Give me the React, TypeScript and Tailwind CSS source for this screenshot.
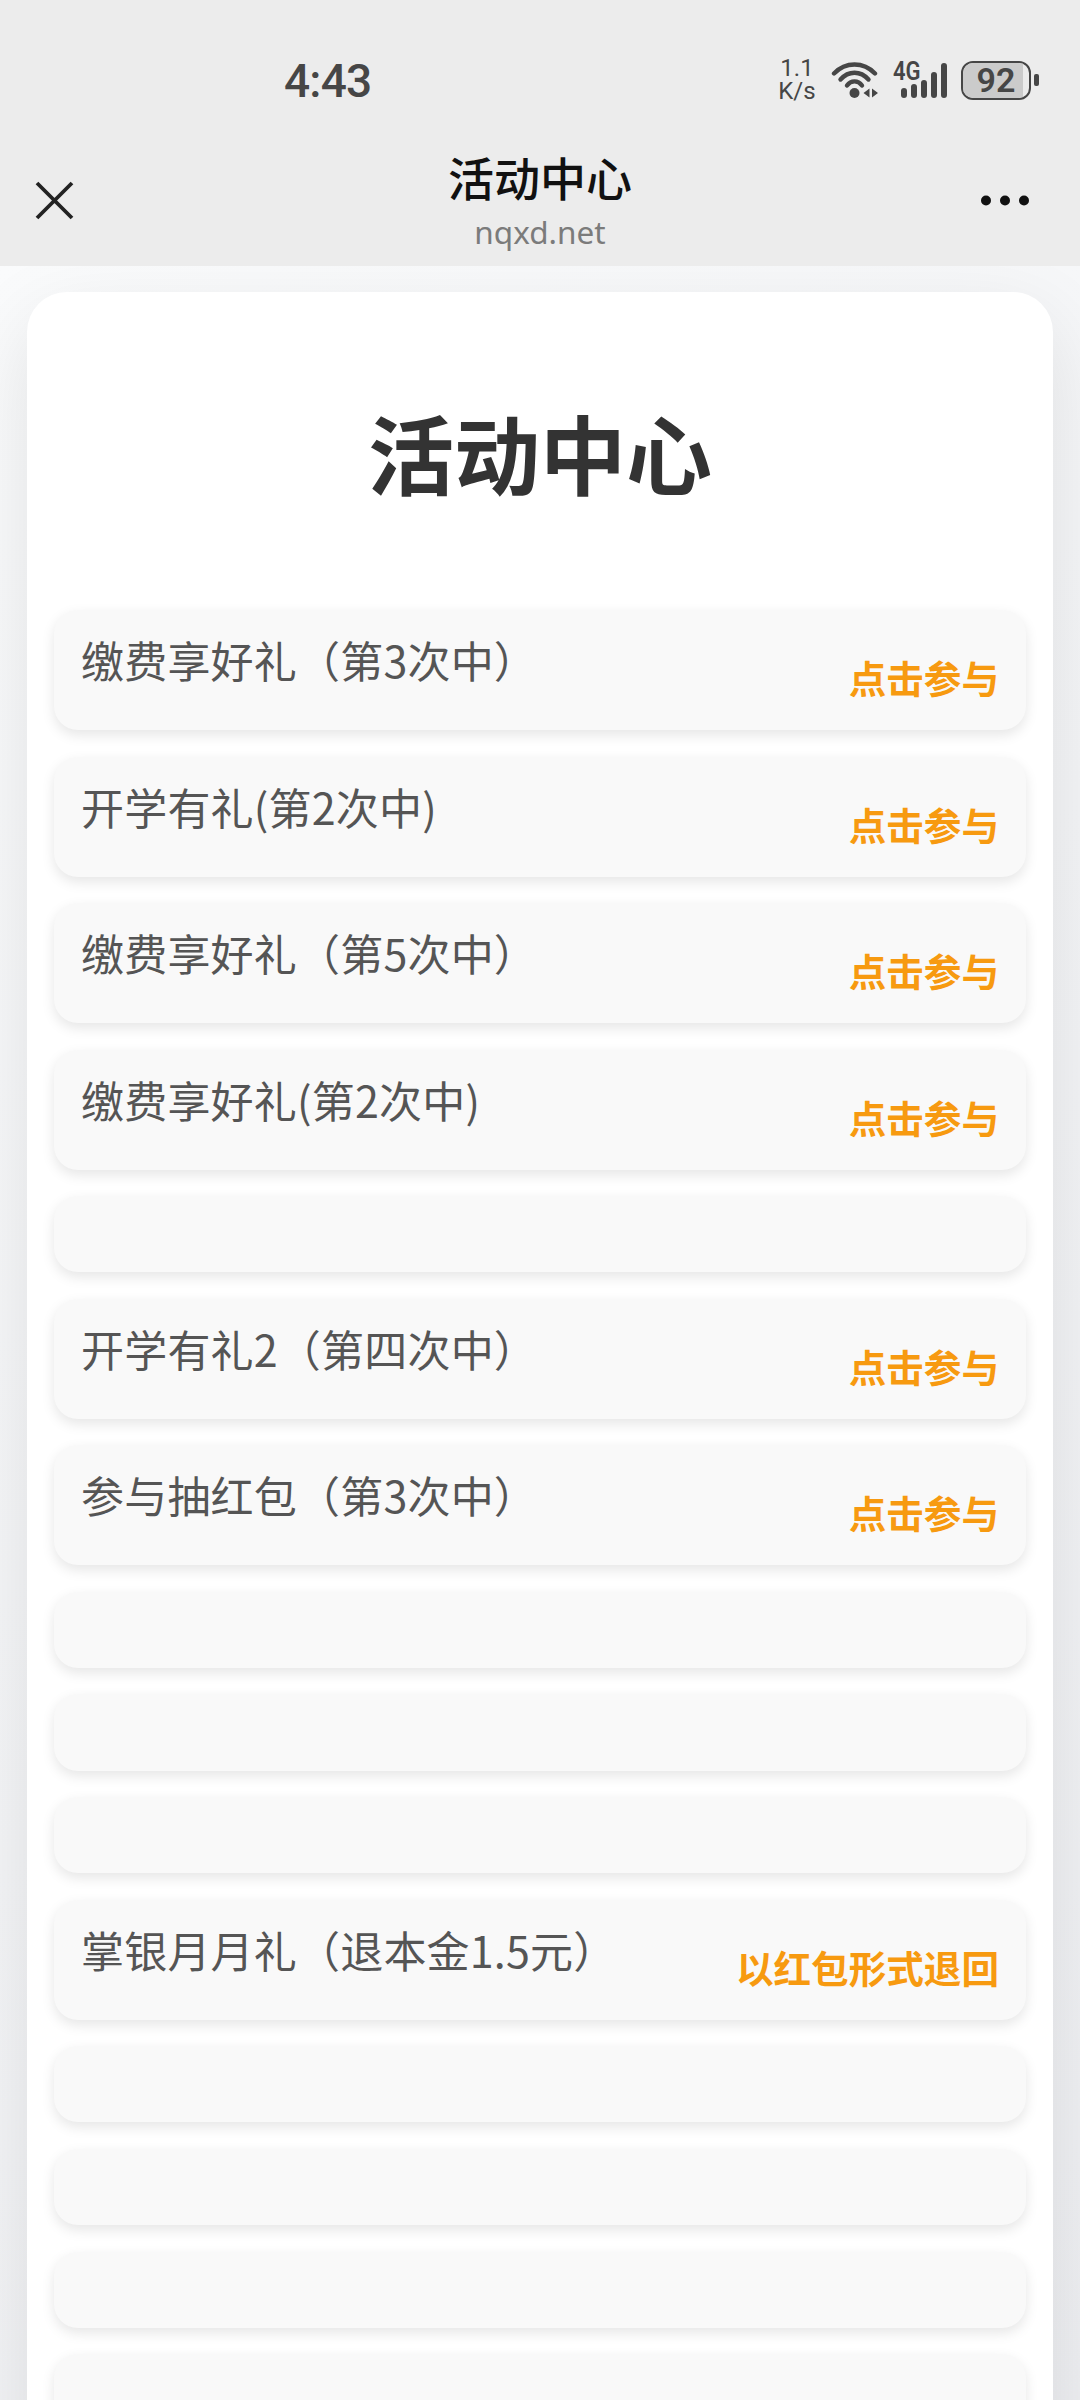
import { cva } from 'class-variance-authority';

interface Activity {
  title?: string;
  action?: string;
}

const activities: Activity[] = [
  { title: '缴费享好礼（第3次中）', action: '点击参与' },
  { title: '开学有礼(第2次中)', action: '点击参与' },
  { title: '缴费享好礼（第5次中）', action: '点击参与' },
  { title: '缴费享好礼(第2次中)', action: '点击参与' },
  {},
  { title: '开学有礼2（第四次中）', action: '点击参与' },
  { title: '参与抽红包（第3次中）', action: '点击参与' },
  {},
  {},
  {},
  { title: '掌银月月礼（退本金1.5元）', action: '以红包形式退回' },
  {},
  {},
  {},
  {},
];

const row = cva(
  'flex shrink-0 justify-between rounded-[24px] bg-[#f9f9f9] px-[27px] shadow-[0_5px_13px_rgba(0,0,0,0.1)]',
  {
    variants: {
      empty: {
        true: 'h-[76.2px]',
        false: 'h-[120px]',
      },
    },
  },
);

function WifiIcon() {
  return (
    <svg width="48" height="38" viewBox="0 0 48 38" fill="none" stroke="#464646" strokeWidth="4.4" strokeLinecap="round">
      <path d="M3 12.500C14.500 0.500 32.500 0.500 44 12.500" />
      <path d="M9.500 18.500C17.500 9.500 29.500 9.500 37.500 18.500" />
      <path d="M16 24.500C20 19 27 19 31 24.500" />
      <circle cx="23.500" cy="32" r="5" fill="#464646" stroke="none" />
      <path d="M38.500 27.500V36.500L32.500 32ZM41 27.500V36.500L47 32Z" fill="#464646" stroke="none" />
    </svg>
  );
}

function SignalIcon() {
  return (
    <div className="relative h-[37px] w-[54px]">
      <span className="absolute -top-[3px] left-0 origin-left scale-x-[0.88] font-['Roboto',sans-serif] text-[25px] leading-[25px] font-semibold">
        4G
      </span>
      <svg className="absolute inset-0" width="54" height="37" stroke="#464646" strokeWidth="6" strokeLinecap="round">
        <path d="M11 29V33M21 25V33M31 21V33M41 13V33M51 4V33" />
      </svg>
    </div>
  );
}

function Battery() {
  return (
    <div className="flex items-center gap-[3px]">
      <div className="relative flex h-[39px] w-[70px] items-center justify-center overflow-hidden rounded-[12px] border-[2.500px] border-[#464646]">
        <div className="absolute inset-y-0 left-0 w-[60px] bg-[#cbcbcb]" />
        <span className="relative font-['Roboto',sans-serif] text-[34px] leading-none font-semibold">92</span>
      </div>
      <div className="h-[12px] w-[5px] rounded-[2px] bg-[#464646]" />
    </div>
  );
}

function StatusBar() {
  return (
    <div className="flex h-[160px] items-center justify-between pr-[41px] pl-[284px] text-[#464646]">
      <span className="pt-[2px] font-['Roboto',sans-serif] text-[46px] leading-none font-medium tracking-[-0.8px]">4:43</span>
      <div className="flex items-center">
        <div className="mr-[15px] w-[38px] text-center font-['Roboto',sans-serif] text-[24px] leading-[23px]">
          <div>1.1</div>
          <div>K/s</div>
        </div>
        <WifiIcon />
        <div className="w-[14px]" />
        <SignalIcon />
        <div className="w-[14px]" />
        <Battery />
      </div>
    </div>
  );
}

function NavBar() {
  return (
    <div className="grid h-[106px] grid-cols-[1fr_auto_1fr] items-start">
      <svg className="mt-[21px] ml-[35px]" width="40" height="40" stroke="#222" strokeWidth="3.800">
        <path d="M2 2L37 37M37 2L2 37" />
      </svg>
      <div className="-mt-[14px] text-center">
        <div className="text-[46px] leading-[60px] font-medium text-[#111]">活动中心</div>
        <div className="mt-[5px] font-['Noto_Sans',sans-serif] text-[31.500px] leading-[42px] text-[#7b7b7b]">nqxd.net</div>
      </div>
      <svg className="mt-[35px] mr-[51px] justify-self-end" width="48" height="11" fill="#111">
        <circle cx="5" cy="5.500" r="5" />
        <circle cx="24" cy="5.500" r="5" />
        <circle cx="43" cy="5.500" r="5" />
      </svg>
    </div>
  );
}

export default function App() {
  return (
    <div className="flex h-[2400px] w-[1080px] flex-col overflow-hidden bg-[#ececec] font-['Noto_Sans_CJK_SC',sans-serif]">
      <StatusBar />
      <NavBar />
      <main className="flex-1 overflow-hidden bg-linear-135 from-[#fafbfc] to-[#eeeff2] px-[27px] pt-[26px]">
        <section className="h-[2300px] rounded-[40px] bg-white px-[27px] shadow-[0_27px_80px_rgba(0,0,0,0.1)]">
          <h1 className="h-[318px] pt-[100px] text-center text-[86px] leading-[120px] font-bold text-[#333]">活动中心</h1>
          <div className="flex flex-col gap-[26.500px]">
            {activities.map((item, idx) => (
              <div key={idx} className={row({ empty: !item.title })}>
                <span className="pt-[19px] text-[43px] leading-[60px] tracking-[0.2px] text-[#555]">{item.title}</span>
                <span className="pt-[42px] text-[37.600px] leading-[50px] font-bold text-[#f79a10]">{item.action}</span>
              </div>
            ))}
          </div>
        </section>
      </main>
    </div>
  );
}
